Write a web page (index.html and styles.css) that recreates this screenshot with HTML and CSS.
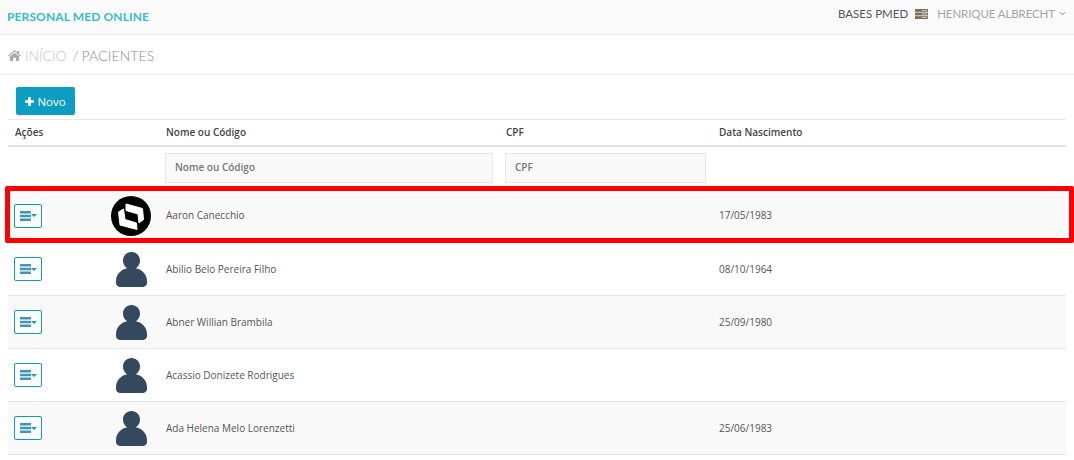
FILE: index.html
```html
<!DOCTYPE html>
<html lang="pt-BR">
<head>
<meta charset="utf-8">
<title>Pacientes</title>
<link rel="stylesheet" href="styles.css">
</head>
<body>
<svg class="defs" width="0" height="0" aria-hidden="true">
  <symbol id="person" viewBox="0 0 32 36">
    <path d="M16 0c5 0 8.800 3.900 8.800 8.800 0 3.500-1.700 6.300-4.200 8 6.500 1.300 11.400 6.500 11.400 13.500v1.700c0 2.200-1.800 4-4 4H4c-2.200 0-4-1.800-4-4v-1.700c0-7 4.900-12.200 11.400-13.500-2.500-1.700-4.200-4.500-4.200-8C7.200 3.900 11 0 16 0z"/>
  </symbol>
  <symbol id="bars" viewBox="0 0 11 10">
    <path d="M0 0h11v2.400H0zM0 3.800h11v2.400H0zM0 7.600h11V10H0z"/>
  </symbol>
</svg>

<header class="topbar">
  <span class="brand">PERSONAL MED ONLINE</span>
  <div class="top-right">
    <span class="bases">BASES PMED</span>
    <svg class="server" viewBox="0 0 13 10" width="13" height="10"><path d="M0 0h13v10H0z" fill="#7a6f5d"/><path d="M0 3.300h13M0 6.700h13" stroke="#fff" stroke-width=".7"/><path d="M7 1.600h5M7 5h5M7 8.400h5" stroke="#d8d4cc" stroke-width=".9"/></svg>
    <span class="user">HENRIQUE ALBRECHT</span>
    <svg class="chev" viewBox="0 0 8 5" width="7" height="5"><path d="M1 1l3 3 3-3" fill="none" stroke="#777" stroke-width="1"/></svg>
  </div>
</header>

<nav class="crumbs">
  <svg class="home" viewBox="0 0 14 12" width="13" height="11"><path d="M7 0l3 2.600V1h2v3.300L14 6l-.8 1L7 1.700.8 7 0 6zM7 3l5 4.200V12H8.500V8.500h-3V12H2V7.200z" fill="#aaa"/></svg>
  <span class="crumb-home">INÍCIO</span>
  <span class="crumb-sep">/</span>
  <span class="crumb-cur">PACIENTES</span>
</nav>

<main class="content">
  <div class="toolbar">
    <button class="btn-new"><svg viewBox="0 0 10 10" width="9" height="9"><path d="M3.500 0h3v3.500H10v3H6.500V10h-3V6.500H0v-3h3.500z" fill="#fff"/></svg> Novo</button>
  </div>
  <table class="grid">
    <colgroup>
      <col class="c-act"><col class="c-pic"><col class="c-name"><col class="c-cpf"><col>
    </colgroup>
    <thead>
      <tr class="heads">
        <th colspan="2" class="th-act">Ações</th>
        <th>Nome ou Código</th>
        <th>CPF</th>
        <th>Data Nascimento</th>
      </tr>
      <tr class="filters">
        <td colspan="2"></td>
        <td><input class="filter" placeholder="Nome ou Código"></td>
        <td><input class="filter" placeholder="CPF"></td>
        <td></td>
      </tr>
    </thead>
    <tbody>
      <tr class="odd">
        <td class="td-act"><button class="menu"><svg viewBox="0 0 11 10" width="11" height="10"><use href="#bars"/></svg><i class="caret"></i></button></td>
        <td class="pic">
          <svg class="logo" viewBox="0 0 40 40" width="40" height="40"><circle cx="20" cy="20" r="20" fill="#000"/><path d="M15 8l16.500 4.500 1 11-4.500 3.500-1-9-12-3.500zM7.500 16l5-3 1.500 10.500 11.500 3.500.5 6.500L9 29z" fill="#fff" stroke="#fff" stroke-width="1" stroke-linejoin="round"/></svg>
        </td>
        <td>Aaron Canecchio</td><td></td><td>17/05/1983</td>
      </tr>
      <tr>
        <td class="td-act"><button class="menu"><svg viewBox="0 0 11 10" width="11" height="10"><use href="#bars"/></svg><i class="caret"></i></button></td>
        <td class="pic"><svg class="avatar"><use href="#person"/></svg></td>
        <td>Abilio Belo Pereira Filho</td><td></td><td>08/10/1964</td>
      </tr>
      <tr class="odd">
        <td class="td-act"><button class="menu"><svg viewBox="0 0 11 10" width="11" height="10"><use href="#bars"/></svg><i class="caret"></i></button></td>
        <td class="pic"><svg class="avatar"><use href="#person"/></svg></td>
        <td>Abner Willian Brambila</td><td></td><td>25/09/1980</td>
      </tr>
      <tr>
        <td class="td-act"><button class="menu"><svg viewBox="0 0 11 10" width="11" height="10"><use href="#bars"/></svg><i class="caret"></i></button></td>
        <td class="pic"><svg class="avatar"><use href="#person"/></svg></td>
        <td>Acassio Donizete Rodrigues</td><td></td><td></td>
      </tr>
      <tr class="odd">
        <td class="td-act"><button class="menu"><svg viewBox="0 0 11 10" width="11" height="10"><use href="#bars"/></svg><i class="caret"></i></button></td>
        <td class="pic"><svg class="avatar"><use href="#person"/></svg></td>
        <td>Ada Helena Melo Lorenzetti</td><td></td><td>25/06/1983</td>
      </tr>
    </tbody>
  </table>
</main>
<div class="highlight"></div>
</body>
</html>
```
FILE: styles.css
```css
html, body { margin: 0; padding: 0; }
body {
  width: 1074px;
  height: 460px;
  overflow: hidden;
  background: #fff;
  font-family: "Open Sans", "Noto Sans", sans-serif;
  color: #555;
  position: relative;
}
.defs { position: absolute; }

.topbar {
  height: 32px;
  background: #fafafa;
  border-bottom: 1px solid #ececec;
  display: flex;
  justify-content: space-between;
  align-items: center;
  padding: 0 8px 2px 7px;
}
.brand {
  font-family: Lato, sans-serif;
  font-size: 12px;
  font-weight: 700;
  color: #36bccb;
  letter-spacing: .12px;
}
.top-right { display: flex; align-items: center; font-family: Lato, sans-serif; font-size: 11.5px; margin-top: -5px; }
.bases { color: #555; }
.server { margin: 0 9px 0 7px; }
.user { color: #a9a49c; letter-spacing: -.1px; }
.chev { margin-left: 4px; }

.crumbs {
  height: 40px;
  border-bottom: 1px solid #ececec;
  display: flex;
  align-items: center;
  padding: 2px 0 0 8px;
  box-sizing: border-box;
  font-family: Lato, sans-serif;
  font-size: 14px;
  font-weight: 300;
}
.home { margin-right: 4px; }
.crumb-home { color: #c4c4c4; letter-spacing: -.1px; }
.crumb-sep { color: #999; margin: 0 3px 0 6px; }
.crumb-cur { color: #8a8a8a; letter-spacing: .1px; }

.content { padding: 12px 8px 0; }
.toolbar { padding-left: 8px; height: 32px; }
.btn-new {
  width: 59px;
  height: 28px;
  padding: 0;
  border: 0;
  border-radius: 2px;
  background: #0d9dc2;
  color: #fff;
  font-family: "Open Sans", sans-serif;
  font-size: 11.5px;
  display: flex;
  align-items: center;
  justify-content: center;
  gap: 3px;
}

.grid {
  width: 1058px;
  table-layout: fixed;
  border-collapse: collapse;
  font-size: 10px;
  color: #555;
}
.c-act { width: 80px; }
.c-pic { width: 70px; }
.c-name { width: 340px; }
.c-cpf { width: 213px; }
.grid th {
  padding: 0 8px;
  box-sizing: border-box;
  height: 26px;
  text-align: left;
  font-weight: 600;
  color: #444;
  border-top: 1px solid #e7e7e7;
  border-bottom: 2px solid #e0e0e0;
}
.grid th.th-act { padding-left: 7px; }
.filters td { height: 44px; padding: 0 5px 0 7px; vertical-align: top; box-sizing: border-box; }
.filter {
  display: block;
  width: 100%;
  height: 30px;
  margin-top: 6px;
  padding: 0 9px 2px;
  box-sizing: border-box;
  border: 1px solid #e7e7e7;
  background: #f9f9f9;
  font-family: "Open Sans", sans-serif;
  font-size: 10px;
  font-weight: 600;
  color: #666;
}
.filter::placeholder { color: #777; opacity: 1; }
tbody tr { height: 53px; }
tbody td { padding: 0 8px 1px; border-bottom: 1px solid #e7e7e7; }
tbody tr.odd { background: #f9f9f9; }
tbody td.td-act { padding-left: 6px; }
.menu {
  width: 28px;
  height: 24px;
  padding: 0 0 0 1px;
  border: 1px solid #0d9dc2;
  border-radius: 2px;
  background: #fff;
  display: flex;
  align-items: center;
  justify-content: center;
  fill: #3f96b8;
  margin-top: 1px;
}
.caret {
  width: 0; height: 0;
  border-left: 3px solid transparent;
  border-right: 3px solid transparent;
  border-top: 3px solid #0d9dc2;
}
td.pic { padding: 0 0 0 23px; }
.logo { display: block; margin: 0 auto; position: relative; left: -4px; }
.avatar { display: block; width: 31px; height: 35px; margin: 0 auto; fill: #34495e; position: relative; left: -3px; }

.highlight {
  position: absolute;
  left: 5px;
  top: 186px;
  width: 1069px;
  height: 57px;
  box-sizing: border-box;
  border: 5px solid #f00;
  border-radius: 2px;
}
```
